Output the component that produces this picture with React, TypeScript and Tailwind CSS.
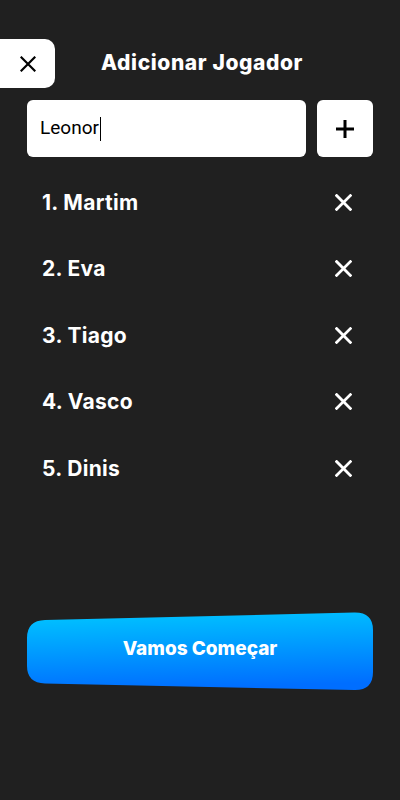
import React from "react"

const players = ["Martim", "Eva", "Tiago", "Vasco", "Dinis"]

function Cross({size = 16, stroke = 2.5, color = "currentColor"}: {size?: number; stroke?: number; color?: string}) {
  return (
    <svg width={size} height={size} viewBox="0 0 16 16" fill="none">
      <path d="M1.5 1.5 L14.5 14.5 M14.5 1.5 L1.5 14.5" stroke={color} strokeWidth={stroke} strokeLinecap="square" />
    </svg>
  )
}

/**
 * Screen for adding players before the game starts
 */
export default function App() {
  const [name, setName] = React.useState("Leonor")

  return (
    <div
      className="w-full h-[800px] bg-[#202020] flex flex-col pt-[39px] text-white"
      style={{fontFamily: "Inter, 'Noto Sans', sans-serif"}}
    >
      <div className="grid grid-cols-[55px_1fr_55px] items-center h-[49px]">
        <button className="h-[49px] w-[55px] bg-white rounded-r-[10px] flex items-center justify-center text-black">
          <Cross size={16} stroke={2.2} />
        </button>
        <h1 className="text-center text-[21px] font-extrabold tracking-[0.6px] -translate-y-[1px] pl-[4px]">
          Adicionar Jogador
        </h1>
        <div />
      </div>

      <div className="flex gap-[11px] px-[27px] mt-[12px]">
        <div className="flex-1 h-[57px] bg-white rounded-[6px] flex items-center pl-[13px]">
          <span
            className="text-[19px] text-black"
            style={{fontFamily: "Roboto, 'Liberation Sans', sans-serif"}}
          >
            {name}
          </span>
          <span className="w-px h-[24px] bg-black ml-px" />
          <input className="hidden" value={name} onChange={e => setName(e.target.value)} />
        </div>
        <button className="w-[56px] h-[57px] bg-white rounded-[6px] flex items-center justify-center">
          <svg width="18" height="18" viewBox="0 0 18 18">
            <path d="M9 0 V18 M0 9 H18" stroke="#000" strokeWidth="3" />
          </svg>
        </button>
      </div>

      <ul className="mt-[12px] flex flex-col">
        {players.map((p, i) => (
          <li key={p} className="h-[66.5px] flex items-center justify-between pl-[42px] pr-[48px]">
            <span className="text-[21px] font-bold tracking-[0.3px]">
              {i + 1}. {p}
            </span>
            <Cross size={17} stroke={2.6} color="#fff" />
          </li>
        ))}
      </ul>

      <button className="relative mx-[27px] mt-[110px] h-[78px] flex items-center justify-center">
        <svg className="absolute inset-0 w-full h-full" viewBox="0 0 346 78" preserveAspectRatio="none">
          <defs>
            <linearGradient id="go" x1="0.2" y1="0" x2="0.35" y2="1">
              <stop offset="0" stopColor="#00c4ff" />
              <stop offset="1" stopColor="#006eff" />
            </linearGradient>
          </defs>
          <path
            d="M0 26 Q0 8.5 18 8 L327 0.5 Q346 0 346 18 L346 60 Q346 78 328 78 L18 71.5 Q0 71 0 54 Z"
            fill="url(#go)"
          />
        </svg>
        <span className="relative text-[19px] font-extrabold -translate-y-[1px]">Vamos Começar</span>
      </button>
    </div>
  )
}
